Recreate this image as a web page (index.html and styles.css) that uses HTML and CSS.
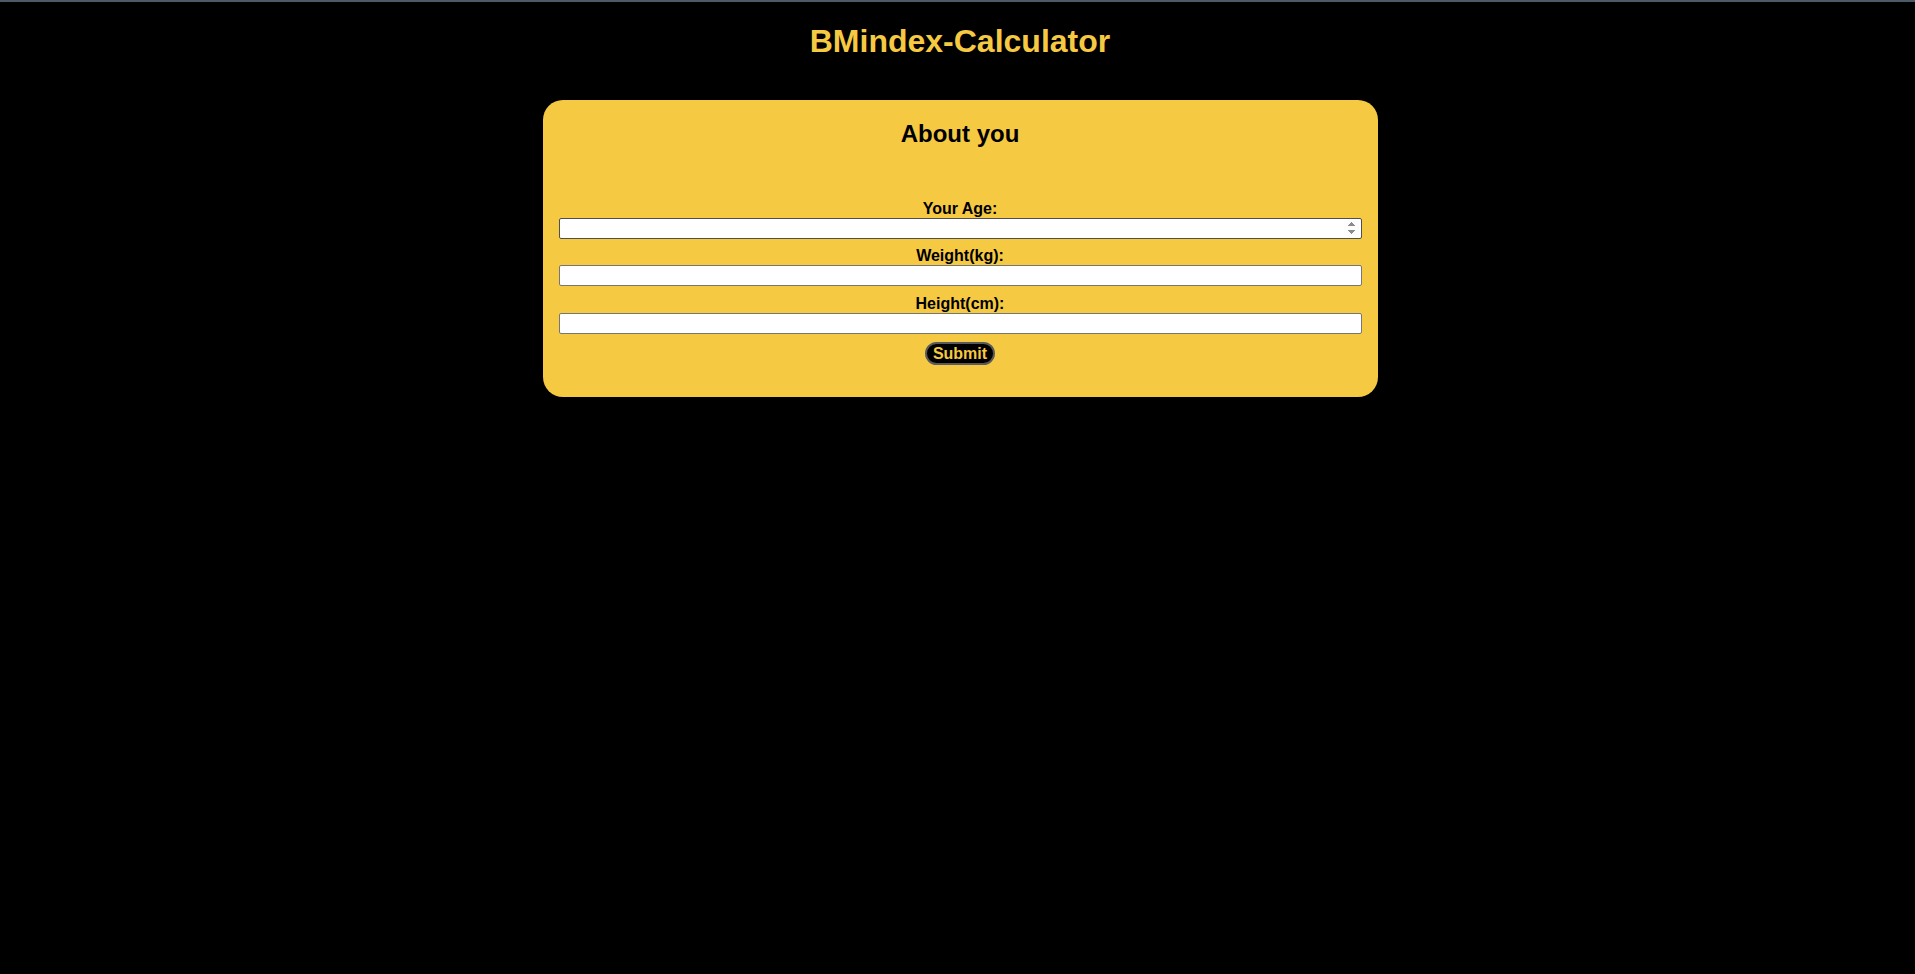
FILE: index.html
```html
<!DOCTYPE html>
<html lang="en">
<head>
<meta charset="utf-8">
<title>BMindex-Calculator</title>
<link rel="stylesheet" href="styles.css">
</head>
<body class="page">
  <h1 class="title">BMindex-Calculator</h1>
  <div class="card">
    <h2 class="card-title">About you</h2>
    <form class="form">
      <div class="field">
        <label class="label" for="age">Your Age:</label>
        <input class="input input-age" id="age" type="number">
      </div>
      <div class="field">
        <label class="label" for="weight">Weight(kg):</label>
        <input class="input" id="weight" type="text">
      </div>
      <div class="field">
        <label class="label" for="height">Height(cm):</label>
        <input class="input" id="height" type="text">
      </div>
      <button class="submit" type="button">Submit</button>
    </form>
  </div>
</body>
</html>
```

FILE: styles.css
```css
html {
  margin: 0;
  background: #000;
}

.page {
  margin: 0;
  min-height: 972px;
  background: #000;
  border-top: 2px solid #4c5b67;
  padding: 0 0 0 5px;
  font-family: "Liberation Sans", Arial, sans-serif;
}

.title {
  margin: 20.5px 0 0;
  font-size: 32px;
  line-height: 37px;
  font-weight: 700;
  color: #f6c942;
  text-align: center;
}

.card {
  box-sizing: border-box;
  width: 835px;
  margin: 40.5px auto 0;
  padding: 20px 16px 32px;
  background: #f6c942;
  border-radius: 20px;
}

.card-title {
  margin: 0 0 50px;
  font-size: 24px;
  line-height: 28px;
  font-weight: 700;
  color: #000;
  text-align: center;
}

.form {
  display: flex;
  flex-direction: column;
  align-items: center;
  gap: 6.3px;
  margin: 0;
}

.field {
  display: flex;
  flex-direction: column;
  align-items: center;
  width: 100%;
}

.label {
  display: block;
  padding-top: 2px;
  font-size: 16px;
  line-height: 18px;
  font-weight: 700;
  color: #000;
}

.input {
  box-sizing: border-box;
  display: block;
  width: 100%;
  height: 21px;
  margin: 0;
  padding: 1px 2px;
  border: 1px solid #767676;
  border-radius: 2px;
  background: #fff;
  font-family: "Liberation Sans", Arial, sans-serif;
  font-size: 13.33px;
}

.input-age {
  border-color: #4f4f4f;
}

.input-age::-webkit-inner-spin-button {
  opacity: 1;
}

.submit {
  margin-top: 2px;
  padding: 0 6px;
  height: 23px;
  border: 2px solid #5a5a5a;
  border-radius: 12px;
  background: #000;
  color: #f6c942;
  font-family: "Liberation Sans", Arial, sans-serif;
  font-size: 16px;
  line-height: 19px;
  font-weight: 700;
  cursor: pointer;
}
```
